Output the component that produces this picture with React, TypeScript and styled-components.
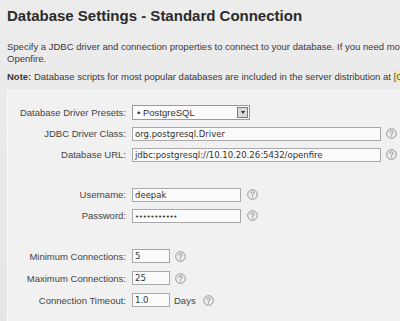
import React from 'react'
import styled, { createGlobalStyle } from 'styled-components'

const GlobalStyle = createGlobalStyle`
  html, body {
    margin: 0;
    padding: 0;
    background: #e9e9e9;
    overflow: hidden;
  }
  body {
    font-family: "Liberation Sans", Arial, sans-serif;
    color: #333;
  }
`

const Page = styled.div`
  width: 400px;
  height: 321px;
  padding: 0 0 0 7px;
  box-sizing: border-box;
  overflow: hidden;
  background: linear-gradient(#ececec, #e6e6e6);
`

const Title = styled.h1`
  margin: 0;
  padding-top: 6px;
  font-size: 15px;
  line-height: 20px;
  font-weight: bold;
  color: #2a2a2a;
  white-space: nowrap;
`

const Para = styled.p<{ $top: number }>`
  margin: ${(p) => p.$top}px 0 0 0;
  font-size: 9.5px;
  line-height: 12px;
  color: #3a3a3a;
  white-space: nowrap;
`

const Code = styled.span`
  background: #f3e7a6;
  color: #555;
`

const Box = styled.div`
  margin-top: 7px;
  border-top: 1px solid #fafafa;
  border-left: 1px solid #fafafa;
  background: #f1f1f1;
  padding: 11px 0 20px 0;
  height: 240px;
  box-sizing: border-box;
`

const Group = styled.div`
  margin-bottom: 19px;
`

const Row = styled.div<{ $h?: number }>`
  display: flex;
  align-items: center;
  height: ${(p) => p.$h ?? 21}px;
`

const Label = styled.div`
  width: 118px;
  margin-right: 6px;
  text-align: right;
  font-size: 9.5px;
  color: #444;
  white-space: nowrap;
`

const Field = styled.div<{ $w: number }>`
  width: ${(p) => p.$w}px;
  height: 14px;
  box-sizing: border-box;
  border: 1px solid #a9a9a9;
  background: #fbfbfb;
  font-family: "DejaVu Sans", Verdana, sans-serif;
  font-size: 8.5px;
  line-height: 12px;
  padding: 0 2px;
  color: #333;
  white-space: nowrap;
  overflow: hidden;
`

const Dots = styled.span`
  font-size: 7px;
  letter-spacing: -0.3px;
`

const Select = styled.div`
  width: 118px;
  height: 15px;
  box-sizing: border-box;
  border: 1px solid #9a9a9a;
  background: #fbfbfb;
  display: flex;
  align-items: center;
  font-size: 9.5px;
  color: #333;
`

const SelectText = styled.span`
  flex: 1;
  padding-left: 4px;
`

const Arrow = styled.div`
  width: 11px;
  height: 11px;
  margin-right: 1px;
  border: 1px solid #7d7d7d;
  background: #d9d9d9;
  box-sizing: border-box;
  display: flex;
  align-items: center;
  justify-content: center;
  &::after {
    content: '';
    border-left: 2.5px solid transparent;
    border-right: 2.5px solid transparent;
    border-top: 3px solid #333;
  }
`

const Unit = styled.span`
  margin-left: 4px;
  font-size: 9.5px;
  color: #444;
`

const HelpWrap = styled.span<{ $gap: number }>`
  display: inline-flex;
  margin-left: ${(p) => p.$gap}px;
`

const Help = ({ gap = 5 }: { gap?: number }) => (
  <HelpWrap $gap={gap}>
    <svg width="11" height="11" viewBox="0 0 11 11">
      <circle cx="5.5" cy="5.5" r="4.8" fill="#eeeeee" stroke="#8a8a8a" strokeWidth="0.9" />
      <path d="M3.9 4.3 C3.9 3.2 4.6 2.8 5.5 2.8 C6.5 2.8 7.1 3.4 7.1 4.1 C7.1 5 5.6 5.2 5.6 6.3"
        fill="none" stroke="#7a7a7a" strokeWidth="0.9" strokeLinecap="round" />
      <circle cx="5.6" cy="7.9" r="0.55" fill="#7a7a7a" />
    </svg>
  </HelpWrap>
)

const App = () => {
  return (
    <Page>
      <GlobalStyle />
      <Title>Database Settings - Standard Connection</Title>
      <Para $top={15}>
        Specify a JDBC driver and connection properties to connect to your database. If you need more information about this process please see the database documentation distributed with
      </Para>
      <Para $top={0}>Openfire.</Para>
      <Para $top={6}>
        <b>Note:</b> Database scripts for most popular databases are included in the server distribution at <Code>[Openfire_HOME]/resources/database</Code>.
      </Para>
      <Box>
        <Group>
          <Row>
            <Label>Database Driver Presets:</Label>
            <Select>
              <SelectText>• PostgreSQL</SelectText>
              <Arrow />
            </Select>
          </Row>
          <Row>
            <Label>JDBC Driver Class:</Label>
            <Field $w={249}>org.postgresql.Driver</Field>
            <Help />
          </Row>
          <Row>
            <Label>Database URL:</Label>
            <Field $w={249}>jdbc:postgresql://10.10.20.26:5432/openfire</Field>
            <Help />
          </Row>
        </Group>
        <Group>
          <Row>
            <Label>Username:</Label>
            <Field $w={109}>deepak</Field>
            <Help gap={6} />
          </Row>
          <Row>
            <Label>Password:</Label>
            <Field $w={109}><Dots>•••••••••••</Dots></Field>
            <Help gap={6} />
          </Row>
        </Group>
        <Group>
          <Row $h={22}>
            <Label>Minimum Connections:</Label>
            <Field $w={38}>5</Field>
            <Help />
          </Row>
          <Row $h={22}>
            <Label>Maximum Connections:</Label>
            <Field $w={38}>25</Field>
            <Help />
          </Row>
          <Row $h={22}>
            <Label>Connection Timeout:</Label>
            <Field $w={38}>1.0</Field>
            <Unit>Days</Unit>
            <Help gap={7} />
          </Row>
        </Group>
      </Box>
    </Page>
  )
}

export default App
